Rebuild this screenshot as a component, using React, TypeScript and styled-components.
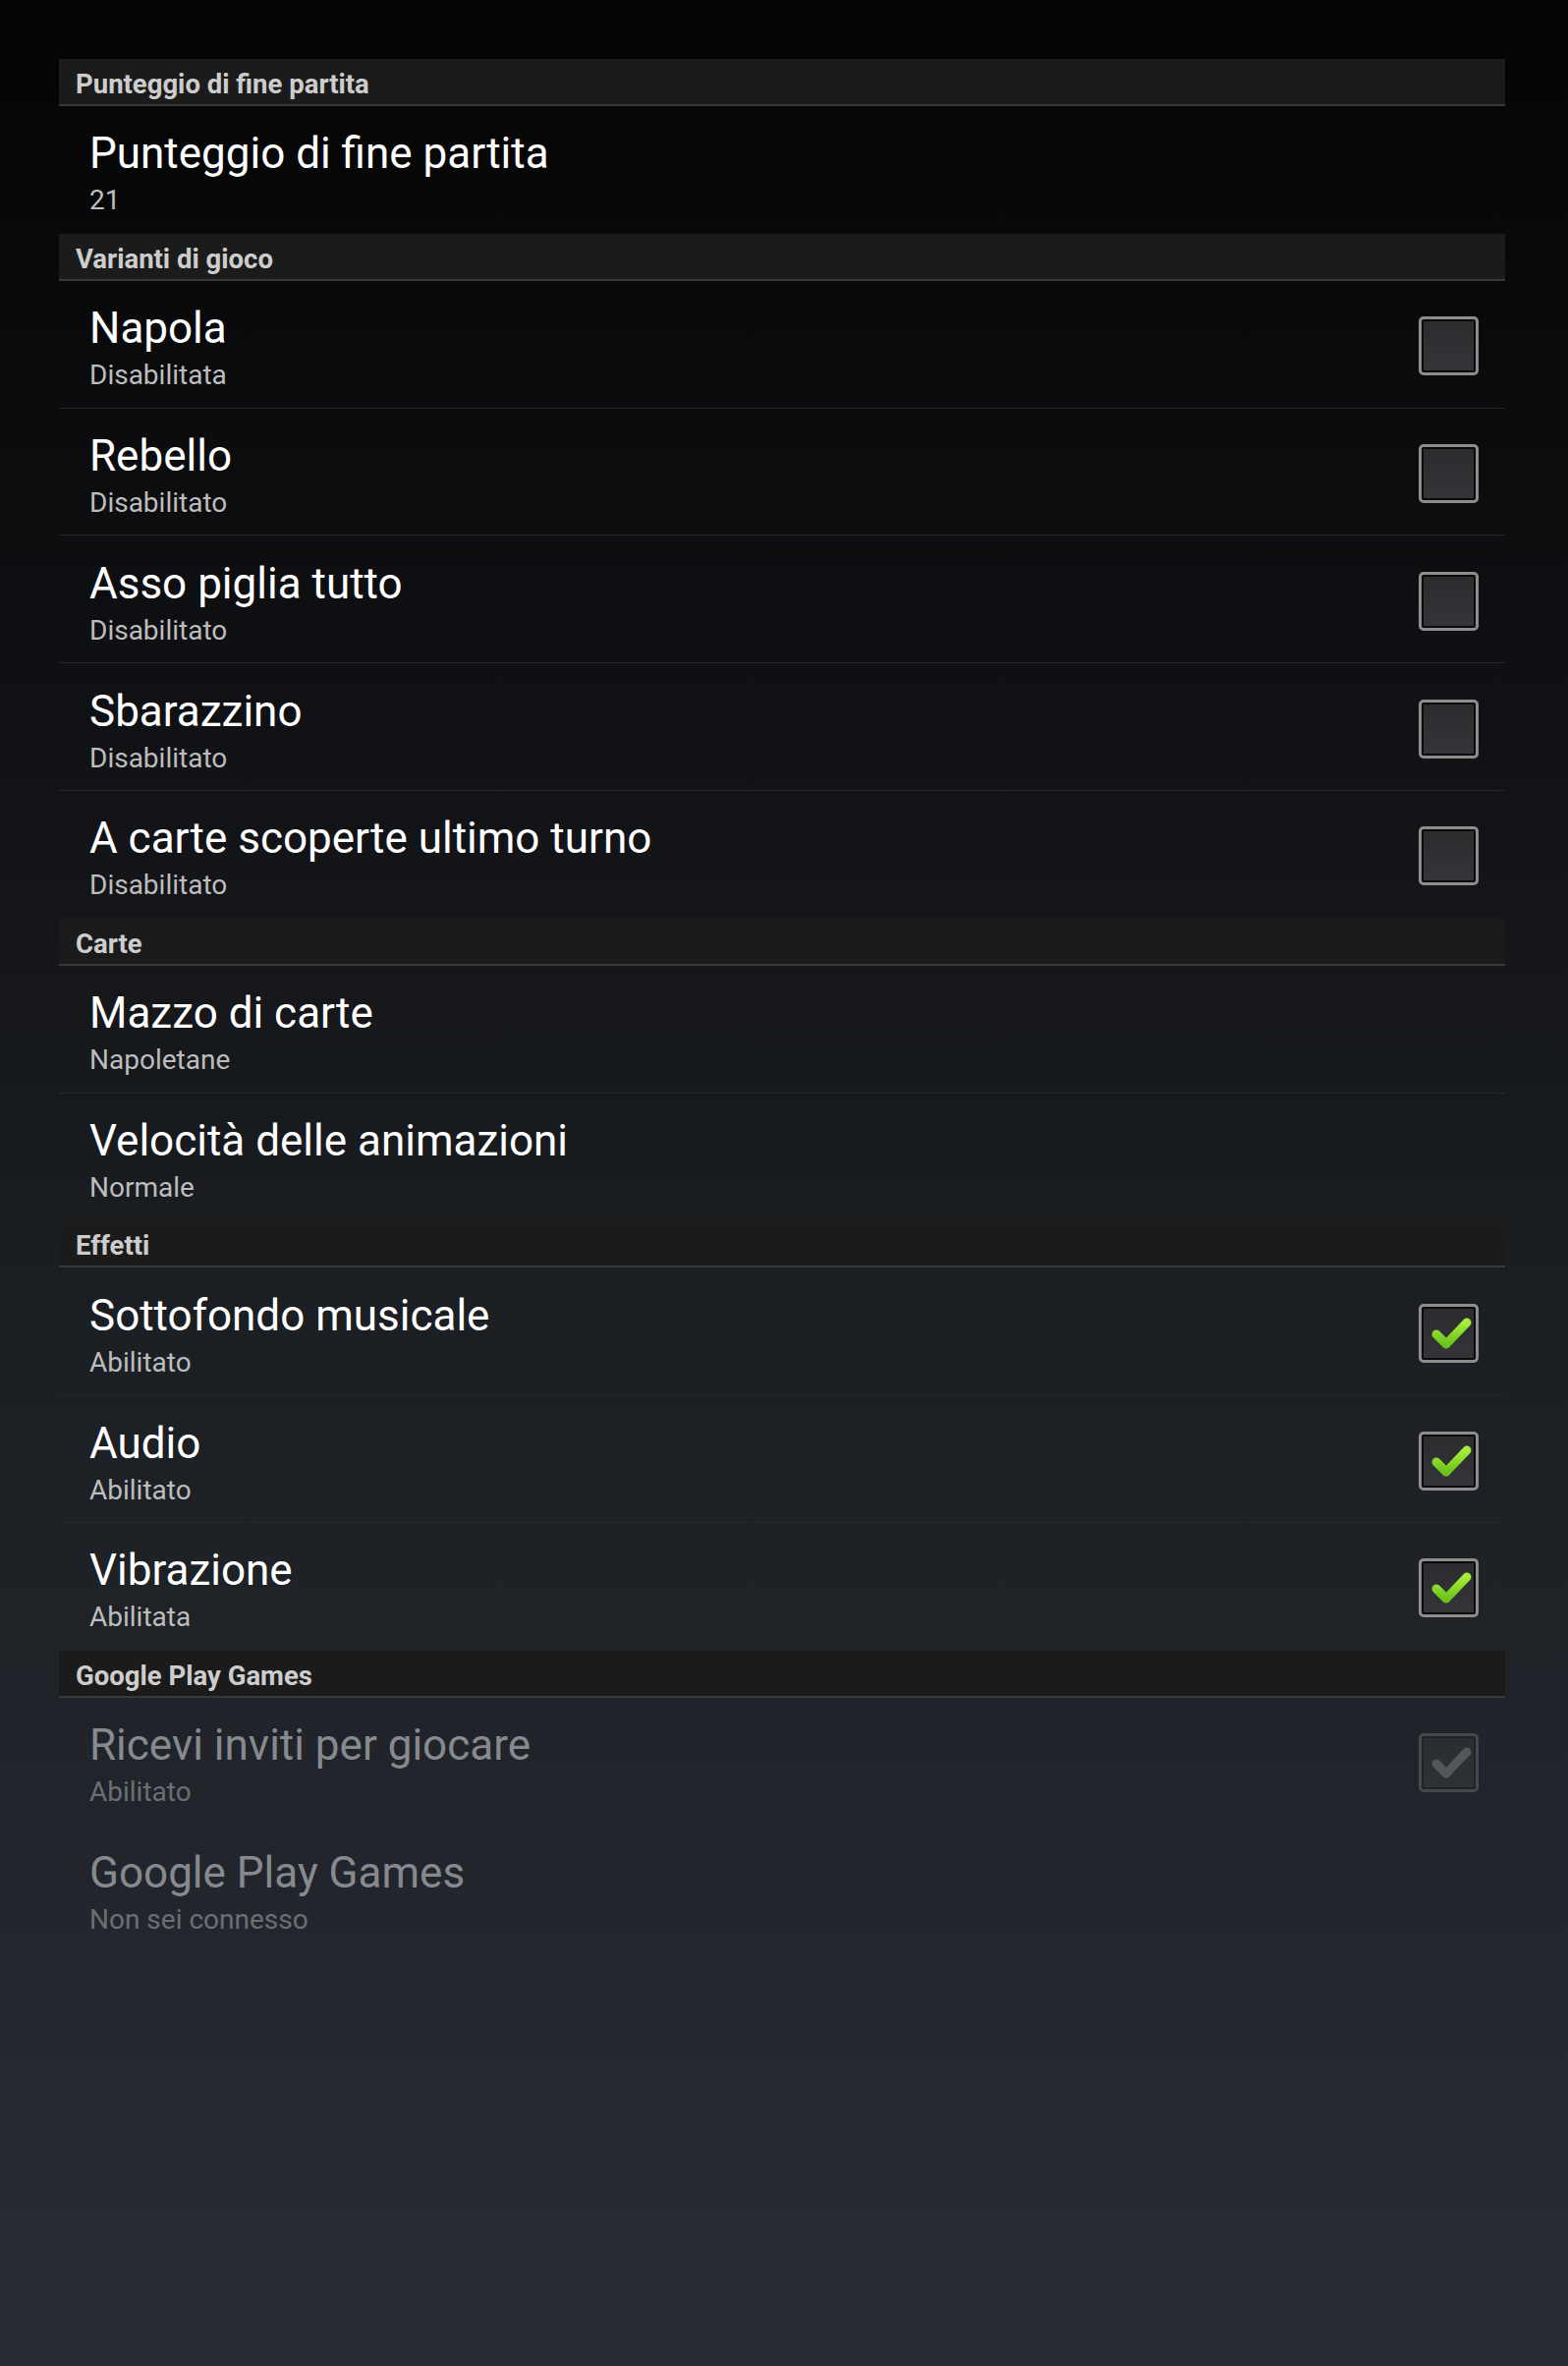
import styled, { createGlobalStyle } from 'styled-components';

const GlobalStyle = createGlobalStyle`
  html, body {
    margin: 0;
    padding: 0;
    background: #040404;
  }
  body {
    font-family: Roboto, 'Noto Sans', sans-serif;
  }
`;

type Pref = {
  title: string;
  summary: string;
  checked?: boolean;
  disabled?: boolean;
};

type Category = {
  name: string;
  items: Pref[];
};

const categories: Category[] = [
  {
    name: 'Punteggio di fine partita',
    items: [{ title: 'Punteggio di fine partita', summary: '21' }],
  },
  {
    name: 'Varianti di gioco',
    items: [
      { title: 'Napola', summary: 'Disabilitata', checked: false },
      { title: 'Rebello', summary: 'Disabilitato', checked: false },
      { title: 'Asso piglia tutto', summary: 'Disabilitato', checked: false },
      { title: 'Sbarazzino', summary: 'Disabilitato', checked: false },
      { title: 'A carte scoperte ultimo turno', summary: 'Disabilitato', checked: false },
    ],
  },
  {
    name: 'Carte',
    items: [
      { title: 'Mazzo di carte', summary: 'Napoletane' },
      { title: 'Velocità delle animazioni', summary: 'Normale' },
    ],
  },
  {
    name: 'Effetti',
    items: [
      { title: 'Sottofondo musicale', summary: 'Abilitato', checked: true },
      { title: 'Audio', summary: 'Abilitato', checked: true },
      { title: 'Vibrazione', summary: 'Abilitata', checked: true },
    ],
  },
  {
    name: 'Google Play Games',
    items: [
      { title: 'Ricevi inviti per giocare', summary: 'Abilitato', checked: true, disabled: true },
      { title: 'Google Play Games', summary: 'Non sei connesso', disabled: true },
    ],
  },
];

const CheckBox = ({ checked, disabled }: { checked: boolean; disabled?: boolean }) => (
  <Box $disabled={disabled}>
    {checked && (
      <svg width="54" height="54" viewBox="3 3 54 54">
        <defs>
          <linearGradient id="tick" x1="0" y1="0" x2="0" y2="1">
            <stop offset="0" stopColor="#a6ec3c" />
            <stop offset="1" stopColor="#6cc21c" />
          </linearGradient>
        </defs>
        <polyline
          points="17,31 27,41 48,19"
          fill="none"
          stroke={disabled ? '#53565a' : 'url(#tick)'}
          strokeWidth="9"
          strokeLinecap="round"
          strokeLinejoin="round"
        />
      </svg>
    )}
  </Box>
);

const App = () => (
  <Page>
    <GlobalStyle />
    <List>
      {categories.map((cat) => (
        <section key={cat.name}>
          <Header>{cat.name}</Header>
          {cat.items.map((item, i) => (
            <Row key={item.title} $last={i === cat.items.length - 1}>
              <Texts>
                <Title $disabled={item.disabled}>{item.title}</Title>
                <Summary $disabled={item.disabled}>{item.summary}</Summary>
              </Texts>
              {item.checked !== undefined && <CheckBox checked={item.checked} disabled={item.disabled} />}
            </Row>
          ))}
        </section>
      ))}
    </List>
  </Page>
);

export default App;

const Page = styled.div`
  min-height: 2408px;
  box-sizing: border-box;
  padding: 60px 64px 0 60px;
  background: linear-gradient(180deg, #040404 0%, #101114 30%, #1b1e22 55%, #282c34 100%);
`;

const List = styled.div`
  display: flex;
  flex-direction: column;
`;

const Header = styled.div`
  box-sizing: border-box;
  height: 48px;
  padding: 10px 0 0 17px;
  background: #1b1b1b;
  border-bottom: 2px solid #383838;
  color: #cdcdcd;
  font-weight: 700;
  font-size: 27.5px;
  line-height: 32px;
`;

const Row = styled.div<{ $last: boolean }>`
  box-sizing: border-box;
  height: 129.8px;
  display: flex;
  align-items: center;
  padding: 0 27px 0 31px;
  border-bottom: 1px solid ${(p) => (p.$last ? 'transparent' : '#25272a')};
`;

const Texts = styled.div`
  flex: 1;
  display: flex;
  flex-direction: column;
  gap: 6px;
  padding-top: 6px;
`;

const Title = styled.div<{ $disabled?: boolean }>`
  font-size: 44px;
  line-height: 52px;
  color: ${(p) => (p.$disabled ? '#868a8f' : '#ffffff')};
`;

const Summary = styled.div<{ $disabled?: boolean }>`
  font-size: 28px;
  line-height: 32px;
  color: ${(p) => (p.$disabled ? '#6b6f74' : '#bdbdbd')};
`;

const Box = styled.div<{ $disabled?: boolean }>`
  box-sizing: border-box;
  width: 61px;
  height: 60px;
  border: 3px solid ${(p) => (p.$disabled ? '#45484c' : '#8d8d8d')};
  border-radius: 5px;
  background: ${(p) => (p.$disabled ? '#202326' : '#0a0a0a')};
  display: flex;
  align-items: center;
  justify-content: center;
  position: relative;
  margin-top: 4px;

  &::before {
    content: '';
    position: absolute;
    inset: 2px;
    background: ${(p) =>
      p.$disabled ? 'linear-gradient(#2a2d31, #2e3135)' : 'linear-gradient(#2b2c2e, #333538)'};
  }

  svg {
    position: relative;
  }
`;
